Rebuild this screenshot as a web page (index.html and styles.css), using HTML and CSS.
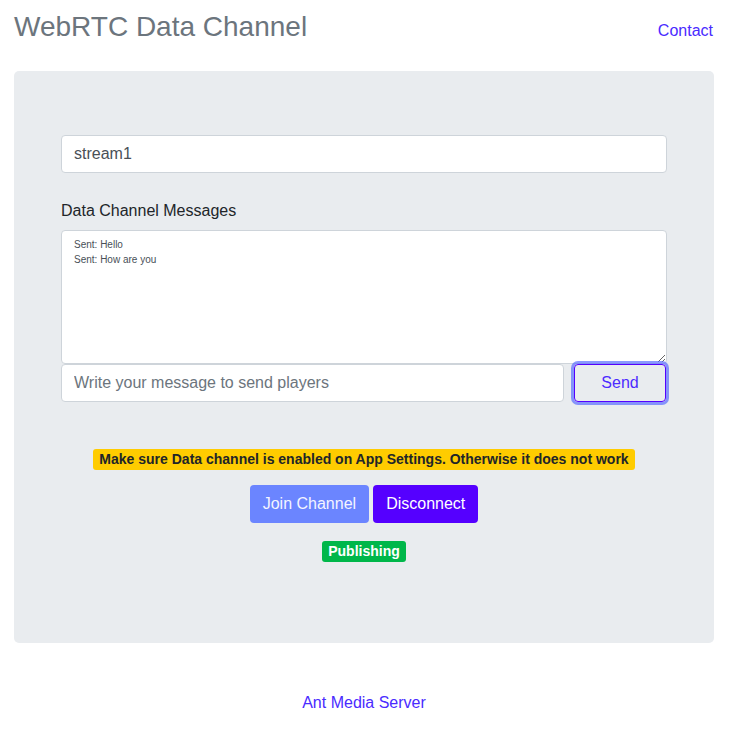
FILE: index.html
```html
<!DOCTYPE html>
<html lang="en">
<head>
<meta charset="utf-8">
<title>WebRTC Data Channel</title>
<link rel="stylesheet" href="styles.css">
</head>
<body>
<div class="page">
  <header class="header">
    <h1 class="title">WebRTC Data Channel</h1>
    <a class="link contact" href="#">Contact</a>
  </header>
  <main class="jumbotron">
    <input class="field stream" type="text" value="stream1">
    <label class="label">Data Channel Messages</label>
    <textarea class="messages" readonly>Sent: Hello
Sent: How are you</textarea>
    <div class="send-row">
      <input class="field msg" type="text" placeholder="Write your message to send players">
      <button class="btn-send" type="button">Send</button>
    </div>
    <div class="center">
      <span class="badge warn">Make sure Data channel is enabled on App Settings. Otherwise it does not work</span>
      <div class="actions">
        <button class="btn join" type="button">Join Channel</button>
        <button class="btn disconnect" type="button">Disconnect</button>
      </div>
      <span class="badge ok">Publishing</span>
    </div>
  </main>
  <footer class="footer">
    <a class="link" href="#">Ant Media Server</a>
  </footer>
</div>
</body>
</html>
```

FILE: styles.css
```css
* { box-sizing: border-box; }
body {
  margin: 0;
  background: #fff;
  font-family: "Liberation Sans", Arial, sans-serif;
  font-size: 16px;
  line-height: 1.5;
  color: #212529;
}
.page {
  width: 700px;
  margin-left: 14px;
}
.header {
  height: 71px;
  padding-top: 10px;
  display: flex;
  justify-content: space-between;
  align-items: flex-start;
}
.title {
  margin: 0;
  font-size: 28px;
  font-weight: 400;
  line-height: 1.2;
  color: #6c757d;
}
.link {
  color: #4a2bff;
  text-decoration: none;
}
.contact {
  margin-top: 9px;
  margin-right: 1px;
}
.jumbotron {
  display: flex;
  flex-direction: column;
  background: #e9ecef;
  border-radius: 5px;
  padding: 64px 47px 81px;
}
.field {
  display: block;
  height: 38px;
  padding: 6px 12px;
  font-family: inherit;
  font-size: 16px;
  line-height: 1.5;
  color: #495057;
  background: #fff;
  border: 1px solid #ced4da;
  border-radius: 4px;
  outline: none;
}
.field::placeholder { color: #6c757d; }
.stream { width: 100%; margin-bottom: 26px; }
.label {
  display: block;
  line-height: 24px;
  margin-bottom: 7px;
}
.messages {
  display: block;
  width: 100%;
  height: 134px;
  padding: 6px 12px;
  font-family: inherit;
  font-size: 10px;
  line-height: 15px;
  color: #495057;
  background: #fff;
  border: 1px solid #ced4da;
  border-radius: 4px;
  outline: none;
}
.send-row {
  display: flex;
  gap: 10px;
}
.msg { flex: 1; min-width: 0; }
.btn-send {
  width: 92px;
  height: 38px;
  margin-right: 1px;
  font-family: inherit;
  font-size: 16px;
  color: #4d2bff;
  background: transparent;
  border: 1px solid #5500ff;
  border-radius: 4px;
  box-shadow: 0 0 0 3px rgba(90, 110, 255, 0.7);
}
.center {
  display: flex;
  flex-direction: column;
  align-items: center;
  padding-top: 47px;
}
.badge {
  display: inline-block;
  font-size: 14px;
  font-weight: 700;
  line-height: 21px;
  padding: 0 6px;
  border-radius: 3px;
}
.warn {
  background: #ffcc00;
  color: #212529;
}
.actions {
  display: flex;
  gap: 4px;
  margin: 15px 0 18px;
}
.btn {
  height: 38px;
  padding: 6px 12px;
  font-family: inherit;
  font-size: 16px;
  line-height: 1.5;
  color: #fff;
  border: 1px solid transparent;
  border-radius: 4px;
}
.join { background: #6b85ff; color: #f4f4ff; }
.disconnect { background: #5500ff; }
.ok {
  background: #00b74a;
  color: #fff;
}
.footer {
  padding-top: 48px;
  text-align: center;
  line-height: 24px;
}
```
